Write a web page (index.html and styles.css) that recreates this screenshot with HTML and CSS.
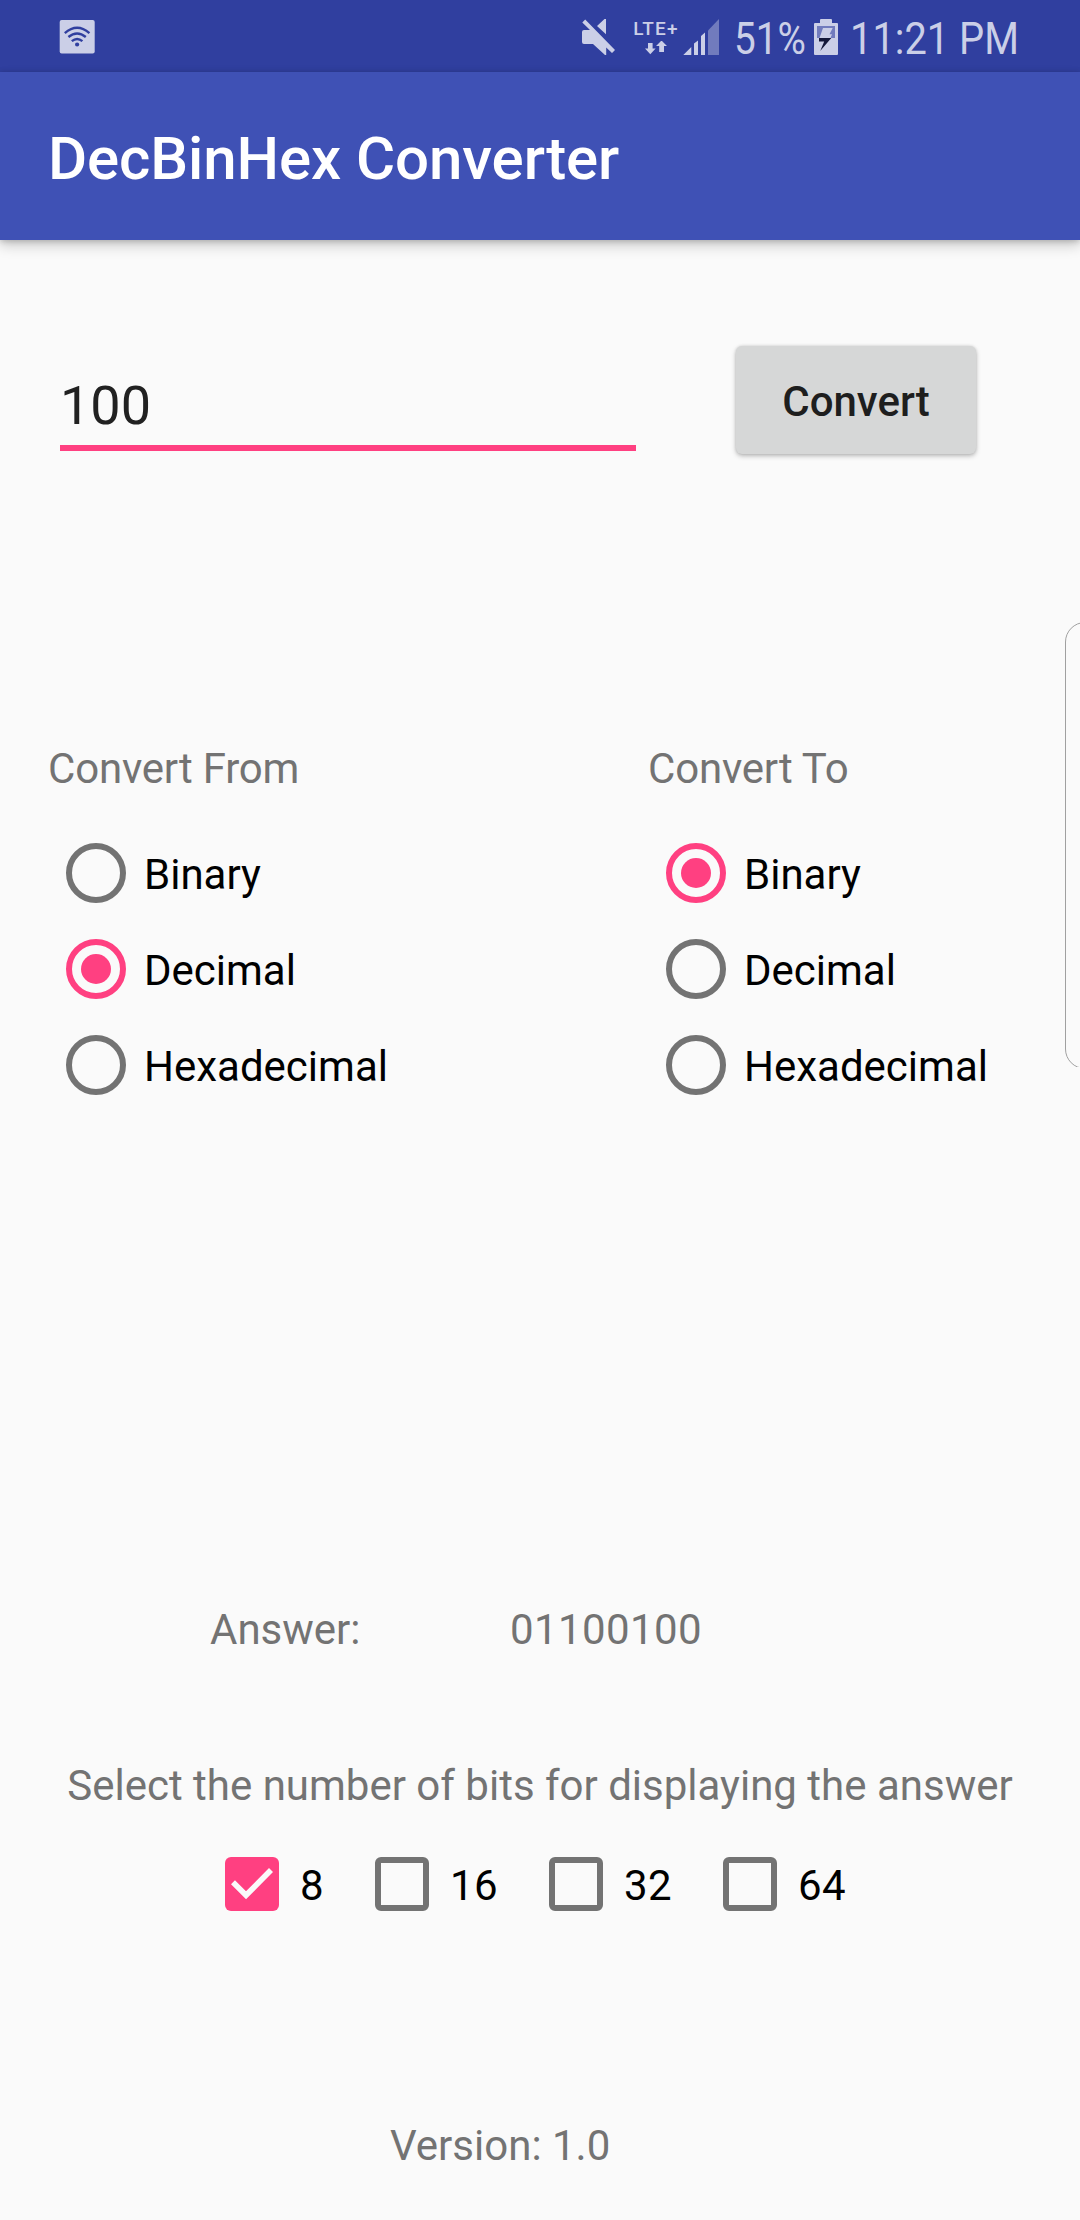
FILE: index.html
```html
<!DOCTYPE html>
<html lang="en">
<head>
<meta charset="utf-8">
<title>DecBinHex Converter</title>
<link rel="stylesheet" href="styles.css">
</head>
<body>
<header class="status-bar">
  <svg class="icon wifi-icon" width="36" height="34" viewBox="59 20 36 34">
    <rect class="solid" x="59.7" y="20" width="35" height="33.4" rx="2"/>
    <g class="wifi-arcs">
      <path d="M64.8 33.2Q77.1 22.4 89.4 33.2"/>
      <path d="M68.4 37Q77.1 30 85.8 37"/>
      <path d="M71.8 41.2Q77.1 36.8 82.4 41.2"/>
    </g>
    <circle class="wifi-dot" cx="77.1" cy="44.5" r="2.1"/>
  </svg>
  <div class="status-right">
    <svg class="icon" width="34" height="36" viewBox="582 19 34 36">
      <path class="solid" d="M582 32q0-2 2-2h6L582.3 22.6l2.9-3.1L615 50l-3 3-5.800-5.400V55h-1.200L593 44h-9q-2 0-2-2zM597 26l7.500-7h1.500v15.300z"/>
    </svg>
    <div class="network">
      <span class="network-label">LTE+</span>
      <svg class="icon" width="22" height="14" viewBox="641 42 22 14">
        <path class="solid" d="M644 44h4.600v5.500h3L646.300 55.300L641 49.500h3zM655.200 53v-6H652l5.500-5.500L663 47h-3v6z"/>
      </svg>
    </div>
    <svg class="icon signal-icon" width="36" height="36" viewBox="683 19 36 36">
      <path class="solid" d="M683.300 55l8-8v8zM694 55V43.500l4-3V55zM701 55V36l4-3.500V55z"/>
      <path class="faint" d="M708 55V30.500L719 19v36z"/>
    </svg>
    <span class="battery-level"><span class="condensed percent">51%</span></span>
    <svg class="icon battery-icon" width="24" height="36" viewBox="814 19 24 36">
      <path class="solid" d="M820 23v-3q0-1 1-1h10q1 0 1 1v3h5q1 0 1 1v30q0 1-1 1h-22q-1 0-1-1V24q0-1 1-1z"/>
      <path class="battery-empty" d="M817 26h18v12h-18z"/>
      <path class="solid" d="M823 28h9.700l-3.200 6.300h2.500l-1.500 3.700h-11z"/>
      <path class="bolt" d="M819 38h12.300L820.200 51l4-9.500H819z"/>
    </svg>
    <time class="clock"><span class="condensed">11:21 PM</span></time>
  </div>
</header>
<div class="app-bar"><h1 class="app-title">DecBinHex Converter</h1></div>
<main class="content">
  <section class="entry">
    <div class="number-field">100</div>
    <button class="convert-button" type="button">Convert</button>
  </section>
  <section class="bases">
    <div class="base-group">
      <h2 class="caption">Convert From</h2>
      <div class="option"><span class="radio"></span><span class="option-label">Binary</span></div>
      <div class="option"><span class="radio selected"></span><span class="option-label">Decimal</span></div>
      <div class="option"><span class="radio"></span><span class="option-label">Hexadecimal</span></div>
    </div>
    <div class="base-group">
      <h2 class="caption">Convert To</h2>
      <div class="option"><span class="radio selected"></span><span class="option-label">Binary</span></div>
      <div class="option"><span class="radio"></span><span class="option-label">Decimal</span></div>
      <div class="option"><span class="radio"></span><span class="option-label">Hexadecimal</span></div>
    </div>
  </section>
  <section class="answer"><span class="answer-label">Answer:</span><output class="digits">01100100</output></section>
  <p class="bits-caption">Select the number of bits for displaying the answer</p>
  <section class="bits">
    <div class="option"><span class="checkbox checked"><svg width="54" height="54" viewBox="0 0 54 54"><path class="tick" d="M8 25.300L21 38.300L46 13"/></svg></span><span class="option-label digits">8</span></div>
    <div class="option"><span class="checkbox"></span><span class="option-label digits">16</span></div>
    <div class="option"><span class="checkbox"></span><span class="option-label digits">32</span></div>
    <div class="option"><span class="checkbox"></span><span class="option-label digits">64</span></div>
  </section>
  <footer class="version">Version: 1.0</footer>
</main>
<aside class="edge-handle"></aside>
</body>
</html>
```
FILE: styles.css
```css
* { box-sizing: border-box; }

body {
  position: relative;
  margin: 0;
  width: 1080px;
  height: 2220px;
  overflow: hidden;
  background: #fafafa;
  color: #737373;
  font: 400 42px/50px Roboto, sans-serif;
}

.icon { display: block; flex: none; }
.solid { fill: #cbcfe7; }
.faint { fill: #717bbd; }

/* Status bar */
.status-bar {
  display: flex;
  justify-content: space-between;
  height: 72px;
  padding: 19px 62px 0 59px;
  background: #303f9f;
  color: #cbcfe7;
}
.wifi-icon { margin-top: 1px; }
.wifi-arcs { fill: none; stroke: #303f9f; stroke-width: 2.4; }
.wifi-dot { fill: #303f9f; }
.status-right { display: flex; }
.network {
  display: flex;
  flex-direction: column;
  align-items: center;
  width: 50px;
  margin-left: 15px;
}
.network-label {
  height: 22px;
  font-size: 19px;
  font-weight: 500;
  line-height: 20px;
  letter-spacing: 1.2px;
}
.signal-icon { margin-left: 2px; }
.battery-level { width: 80px; margin-left: 15px; }
.battery-icon { margin-right: 12px; }
.clock { width: 168px; }
.condensed {
  display: block;
  font-size: 45px;
  line-height: 39px;
  white-space: nowrap;
  transform: scaleX(0.885);
  transform-origin: left;
}
.percent { transform: scaleX(0.86); }
.battery-empty { fill: #717bbd; }
.bolt { fill: #15193a; }

/* App bar */
.app-bar {
  display: flex;
  align-items: center;
  height: 168px;
  padding: 6px 48px 0;
  background: #3f51b5;
  box-shadow: 0 6px 12px rgba(0, 0, 0, 0.18), 0 1px 6px rgba(0, 0, 0, 0.2);
}
.app-title {
  margin: 0;
  color: #fff;
  font-size: 60px;
  font-weight: 500;
  line-height: 70px;
  letter-spacing: -0.1px;
}

.content { display: flex; flex-direction: column; }

/* Number entry */
.entry {
  display: flex;
  align-items: flex-start;
  justify-content: space-between;
  padding: 105px 104px 0 60px;
}
.number-field {
  width: 576px;
  height: 106px;
  padding-top: 29px;
  border-bottom: 6px solid #ff4081;
  color: #212121;
  font-size: 54px;
  line-height: 64px;
}
.convert-button {
  width: 240px;
  height: 108px;
  margin-top: 1px;
  padding: 4px 0 0;
  border: 0;
  border-radius: 6px;
  background: #d6d7d7;
  box-shadow: 0 2px 5px rgba(0, 0, 0, 0.26), 0 0 3px rgba(0, 0, 0, 0.12);
  color: #1e1e1e;
  font: 500 42px/50px Roboto, sans-serif;
}

/* Radio and checkbox rows */
.option {
  display: flex;
  align-items: center;
  height: 96px;
}
.option-label { padding-top: 4px; color: #000; }
.digits { letter-spacing: 0.41px; }
.radio {
  display: grid;
  place-items: center;
  width: 60px;
  height: 60px;
  margin: 0 18px;
  border: 6px solid #737373;
  border-radius: 50%;
}
.radio.selected { border-color: #ff4081; }
.radio.selected::after {
  content: "";
  width: 30px;
  height: 30px;
  border-radius: 50%;
  background: #ff4081;
}
.checkbox {
  width: 54px;
  height: 54px;
  margin: 0 21px;
  border: 6px solid #737373;
  border-radius: 6px;
}
.checkbox.checked { border: 0; background: #ff4081; }
.checkbox svg { display: block; }
.tick { fill: none; stroke: #fafafa; stroke-width: 5.600; }

.bases {
  display: grid;
  grid-template-columns: 600px 1fr;
  padding: 290px 0 0 48px;
}
.caption {
  margin: 0 0 31px;
  font-size: 42px;
  font-weight: 400;
  letter-spacing: -0.2px;
}

/* Result */
.answer {
  display: flex;
  padding: 492px 0 0 210px;
}
.answer-label { width: 300px; }
.bits-caption {
  margin: 106px 0 0;
  text-align: center;
}
.bits {
  display: flex;
  gap: 30px;
  padding: 25px 0 0 204px;
}
.version { padding: 189px 0 0 390px; }

/* Screen-edge panel handle, floats over the page */
.edge-handle {
  position: absolute;
  top: 622px;
  right: 0;
  width: 15px;
  height: 445px;
  overflow: hidden;
}
.edge-handle::before {
  content: "";
  display: block;
  width: 60px;
  height: 445px;
  border: 1px solid #a0a0a0;
  border-radius: 20px;
}
```
